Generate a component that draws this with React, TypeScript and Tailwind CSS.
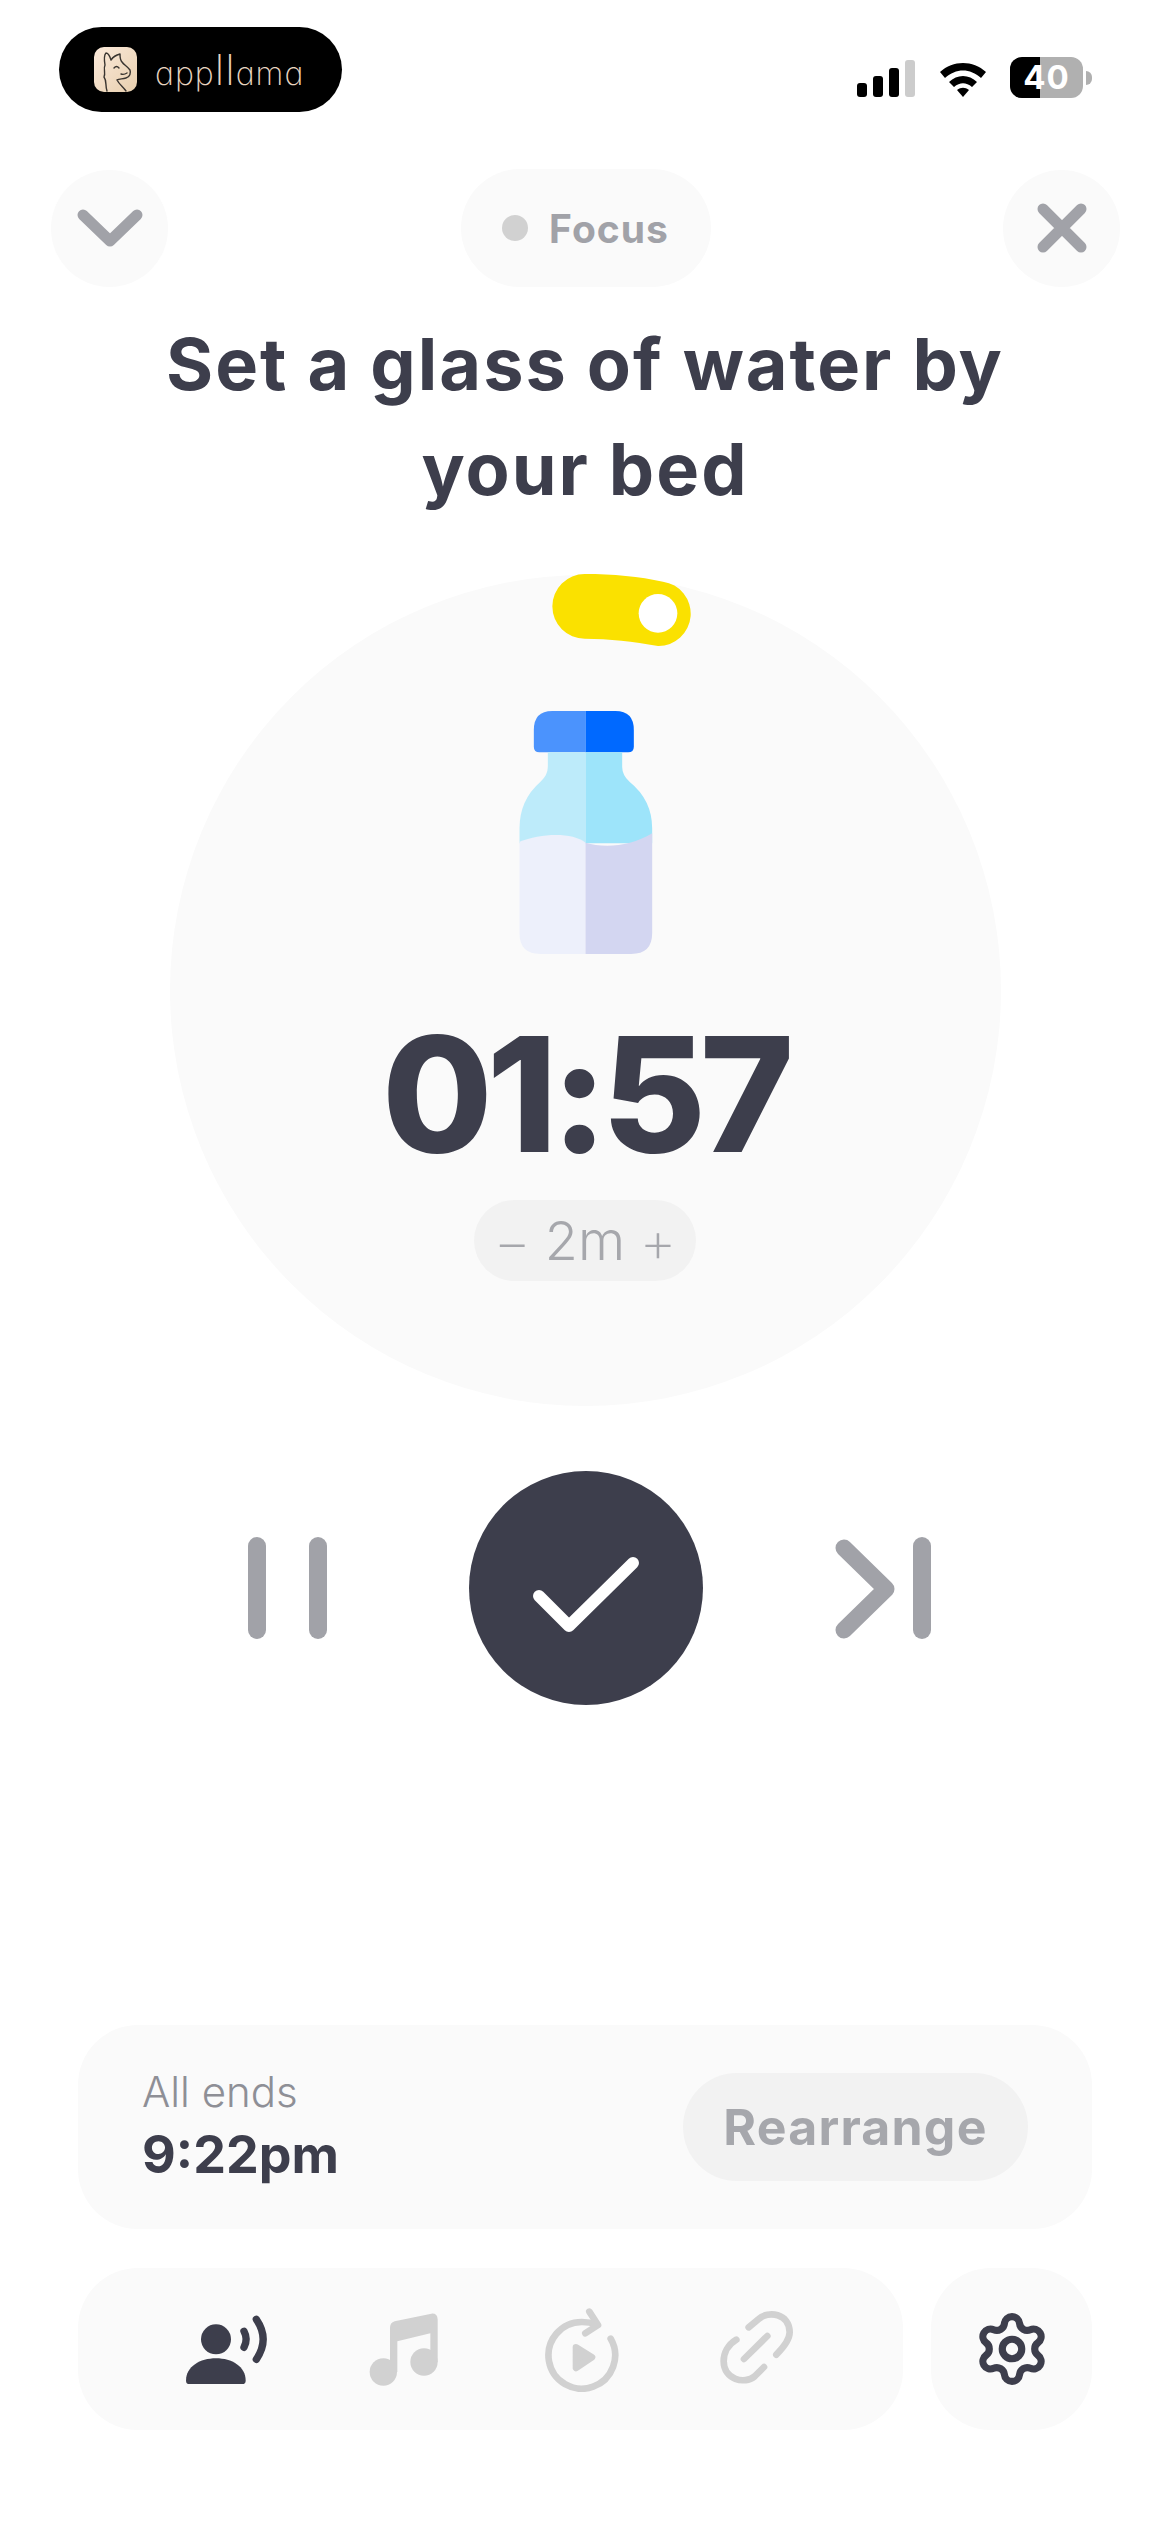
import { Settings } from "lucide-react";

const FONT = "[font-family:Inter,'Liberation_Sans',sans-serif]";

function StatusIcons() {
  return (
    <div className="flex items-center">
      <div className="flex h-[38px] items-end gap-[6px]">
        <div className="h-[14px] w-[10px] rounded-[3px] bg-black" />
        <div className="h-[21px] w-[10px] rounded-[3px] bg-black" />
        <div className="h-[29px] w-[10px] rounded-[3px] bg-black" />
        <div className="h-[37px] w-[10px] rounded-[3px] bg-[#cccccc]" />
      </div>
      <svg className="ml-[23px]" width="50" height="38" viewBox="0 0 50 38">
        <path d="M2 13 C15 1 35 1 48 13 L43 19 C32 9 18 9 7 19Z" fill="#000" />
        <path d="M11 23 C19 15 31 15 39 23 L34 28 C28 23 22 23 16 28Z" fill="#000" />
        <path d="M19 31 C23 28 27 28 31 31 L25 38Z" fill="#000" />
      </svg>
      <div className="relative ml-[22px] flex h-[41px] w-[73px] overflow-hidden rounded-[12px] bg-[#b0b0b0]">
        <div className="h-full w-[30px] bg-black" />
        <span className="absolute inset-0 flex items-center justify-center text-[33px] font-bold leading-none tracking-[1px] text-white">
          40
        </span>
      </div>
      <div className="ml-[3px] h-[14px] w-[6px] rounded-r-full bg-[#b0b0b0]" />
    </div>
  );
}

function BrandPill() {
  return (
    <div className="flex h-[85px] w-[283px] items-center rounded-full bg-black pl-[35px]">
      <div className="h-[45px] w-[43px] overflow-hidden rounded-[10px] bg-gradient-to-br from-[#fbeadb] to-[#e8cfae]">
        <svg width="43" height="45" viewBox="0 0 43 45" fill="none" stroke="#3a3530" strokeWidth="1.4" strokeLinecap="round" strokeLinejoin="round">
          <path d="M13 44 C11 38 13 34 10 30 C12 26 9 22 11 18 C10 12 10 8 12 6 C15 6 16 10 17 13 C19 10 22 8 26 7 C26 10 26 13 28 15 C30 18 33 19 36 23 C37 26 36 30 32 31 C28 32 25 32 23 33 C25 37 29 40 32 44" />
          <path d="M20 21 Q22.5 18 25 21" />
          <path d="M33 26 Q30 28 27 27" />
        </svg>
      </div>
      <span className="ml-[18px] text-[32px] font-extralight leading-none tracking-[1px] text-[#e8d5c0] [font-feature-settings:'cv11']">
        app<span className="text-[42px]">ll</span>ama
      </span>
    </div>
  );
}

function WaterBottle() {
  return (
    <svg width="137" height="245" viewBox="230 480 410 735">
      <path d="M435 483 H335 Q280 483 280 540 V590 Q280 607 297 607 H435Z" fill="#4b93fd" />
      <path d="M435 483 H525 Q580 483 580 540 V590 Q580 607 563 607 H435Z" fill="#0069ff" />
      <path d="M435 607 H322 V650 Q322 675 300 695 Q237 750 237 835 V880 H435Z" fill="#bdebfa" />
      <path d="M435 607 H545 V650 Q545 675 567 695 Q635 750 635 835 V880 H435Z" fill="#9de4fa" />
      <path d="M435 878 C395 845 300 850 237 875 V1150 Q237 1212 300 1212 H435Z" fill="#edf0fb" />
      <path d="M435 878 C490 895 570 890 635 850 V1150 Q635 1212 572 1212 H435Z" fill="#d3d6f1" />
    </svg>
  );
}

function SoundToggle() {
  return (
    <svg className="absolute left-[382px] top-[-1px]" width="139" height="72" viewBox="337 72 417 216">
      <path d="M435 72 C520 72 600 80 670 95 A97 97 0 0 1 655 288 C580 275 510 266 435 266 A97 97 0 0 1 435 72Z" fill="#fae100" />
      <circle cx="655" cy="190" r="58" fill="#fff" />
    </svg>
  );
}

function VoiceIcon() {
  return (
    <svg width="84" height="75" viewBox="48 66 252 225" fill="none">
      <circle cx="138" cy="148" r="45" fill="#3d3e4c" />
      <path d="M48 272 C48 230 90 205 138 205 C186 205 227 230 227 272 Q227 282 217 282 H58 Q48 282 48 272Z" fill="#3d3e4c" />
      <path d="M222 124 Q235 148 222 172" stroke="#3d3e4c" strokeWidth="22" strokeLinecap="round" />
      <path d="M259 88 Q300 148 259 208" stroke="#3d3e4c" strokeWidth="22" strokeLinecap="round" />
    </svg>
  );
}

function MusicIcon() {
  return (
    <svg width="70" height="75" viewBox="595 70 210 225" fill="#d1d1d1">
      <circle cx="638" cy="250" r="41" />
      <circle cx="760" cy="220" r="41" />
      <path d="M658 250 V118 Q658 102 672 98 L782 75 Q800 73 801 92 V220 H779 V134 L680 158 V250Z" />
    </svg>
  );
}

function ReplayIcon() {
  return (
    <svg width="76" height="86" viewBox="60 40 228 258" fill="none" stroke="#d1d1d1" strokeWidth="20" strokeLinecap="round" strokeLinejoin="round">
      <path d="M263 138 A100 100 0 1 1 177 88 C190 88 205 90 222 96" />
      <path d="M199 57 L225 97 L187 122" />
      <path d="M159 164 L207 194 L159 226Z" fill="#d1d1d1" />
    </svg>
  );
}

function LinkIcon() {
  return (
    <svg width="76" height="78" viewBox="593 66 228 234" fill="none" stroke="#d1d1d1" strokeWidth="20" strokeLinecap="round">
      <path d="M682 118 L712 93 C740 68 805 75 805 133 C805 155 785 180 765 200" />
      <path d="M645 155 C620 170 607 195 607 220 C607 275 670 290 700 265 L728 237" />
      <path d="M668 213 L738 144" />
    </svg>
  );
}

export default function App() {
  return (
    <div className={`flex h-[2532px] w-[1170px] flex-col bg-white ${FONT}`}>
      {/* system bar */}
      <div className="flex h-[112px] items-end justify-between pl-[59px] pr-[78px] pt-[27px]">
        <BrandPill />
        <div className="mb-[14px]">
          <StatusIcons />
        </div>
      </div>

      {/* session header */}
      <div className="mt-[57px] flex items-center justify-between pl-[51px] pr-[50px]">
        <button className="flex h-[117px] w-[117px] items-center justify-center rounded-full bg-[#fafafa]">
          <svg width="66" height="38" viewBox="0 0 66 38" fill="none" stroke="#a1a2a8" strokeWidth="11" strokeLinecap="round" strokeLinejoin="round">
            <path d="M6 6 L33 32 L60 6" />
          </svg>
        </button>
        <div className="flex h-[118px] w-[250px] items-center justify-center gap-[21px] rounded-full bg-[#fafafa]">
          <div className="h-[26px] w-[26px] rounded-full bg-[#d1d1d1]" />
          <span className="text-[39px] font-bold leading-none tracking-[1px] text-[#a1a2a8]">Focus</span>
        </div>
        <button className="flex h-[117px] w-[117px] items-center justify-center rounded-full bg-[#fafafa]">
          <svg width="50" height="50" viewBox="0 0 50 50" fill="none" stroke="#a1a2a8" strokeWidth="11" strokeLinecap="round">
            <path d="M6 6 L44 44 M44 6 L6 44" />
          </svg>
        </button>
      </div>

      <h1 className="mx-auto mt-[24px] w-[900px] text-center text-[72px] font-bold leading-[105px] tracking-[2px] text-[#3d3e4c]">
        Set a glass of water by your bed
      </h1>

      {/* timer dial */}
      <div className="relative mx-auto mt-[54px] flex h-[831px] w-[831px] flex-col items-center rounded-full bg-[#fafafa] pt-[135px]">
        <SoundToggle />
        <WaterBottle />
        <div className="mt-[59px] text-[160px] font-extrabold leading-[160px] tracking-[-6px] text-[#3d3e4c]">01:57</div>
        <div className="mt-[26px] flex h-[81px] w-[222px] items-center justify-center gap-[14px] rounded-full bg-[#f2f2f2] font-light leading-none text-[#a6a7ac]">
          <span className="text-[58px] font-extralight">−</span>
          <span className="text-[54px]">2m</span>
          <span className="text-[58px] font-extralight">+</span>
        </div>
      </div>

      {/* playback controls */}
      <div className="mt-[65px] flex items-center pl-[248px]">
        <svg width="79" height="102" viewBox="0 0 79 102" fill="#a1a2a8">
          <rect x="0" y="0" width="18" height="102" rx="9" />
          <rect x="61" y="0" width="18" height="102" rx="9" />
        </svg>
        <button className="ml-[142px] flex h-[234px] w-[234px] items-center justify-center rounded-full bg-[#3d3e4c]">
          <svg width="106" height="90" viewBox="0 0 106 90" fill="none" stroke="#fff" strokeWidth="12" strokeLinecap="round" strokeLinejoin="round">
            <path d="M6 53 L36 83 L100 20" />
          </svg>
        </button>
        <svg className="ml-[132px]" width="96" height="102" viewBox="0 0 96 102" fill="none" stroke="#a1a2a8" strokeLinecap="round" strokeLinejoin="round">
          <path d="M9 11 L51 52 L9 93" strokeWidth="17" />
          <path d="M87 9 V93" strokeWidth="18" />
        </svg>
      </div>

      {/* footer cards */}
      <div className="mt-auto flex flex-col gap-[39px] pb-[102px] pl-[78px] pr-[78px]">
        <div className="flex h-[204px] items-center justify-between rounded-[60px] bg-[#fafafa] pl-[64px] pr-[64px]">
          <div className="-mt-[2px] flex flex-col">
            <span className="text-[42px] font-light leading-[50px] text-[#8e8f96]">All ends</span>
            <span className="mt-[8px] text-[52px] font-bold leading-[60px] text-[#3d3e4c]">9:22pm</span>
          </div>
          <button className="flex h-[108px] w-[345px] items-center justify-center rounded-full bg-[#f2f2f2] text-[50px] font-bold leading-none tracking-[1.2px] text-[#a6a7ac]">
            Rearrange
          </button>
        </div>
        <div className="flex h-[162px] justify-between">
          <div className="flex w-[825px] items-center rounded-[60px] bg-[#fafafa] pl-[108px]">
            <VoiceIcon />
            <div className="ml-[99px]"><MusicIcon /></div>
            <div className="ml-[104px]"><ReplayIcon /></div>
            <div className="ml-[100px]"><LinkIcon /></div>
          </div>
          <div className="flex w-[161px] items-center justify-center rounded-[60px] bg-[#fafafa]">
            <Settings size={78} strokeWidth={2.2} color="#3d3e4c" />
          </div>
        </div>
      </div>
    </div>
  );
}
